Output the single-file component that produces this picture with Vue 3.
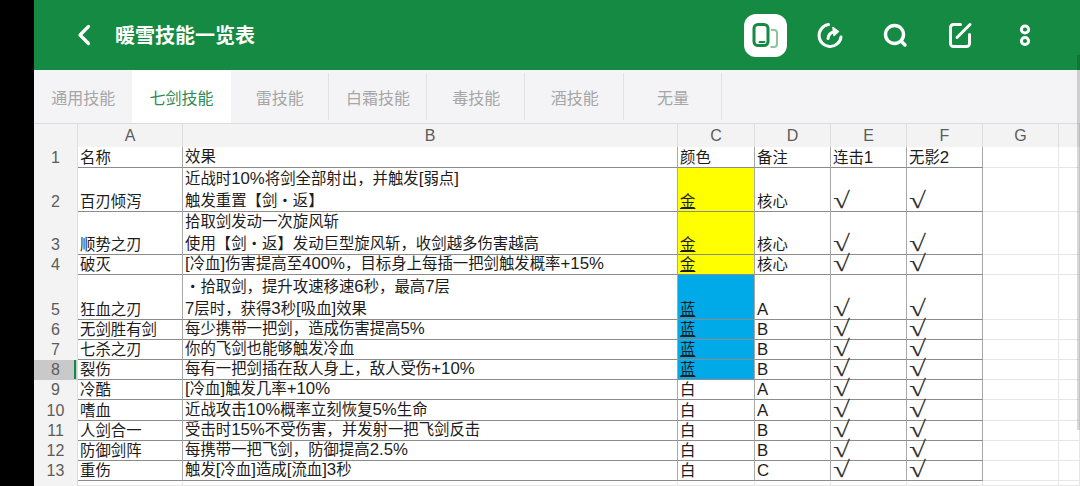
<script setup>
const tabs = ['通用技能', '七剑技能', '雷技能', '白霜技能', '毒技能', '酒技能', '无量']
const cols = ['A', 'B', 'C', 'D', 'E', 'F', 'G', '']
const rows = [
  { h: 21, name: '名称', fx: ['效果'], color: '颜色', note: '备注', e: '连击1', f: '无影2', title: true },
  { h: 44, name: '百刃倾泻', fx: ['近战时10%将剑全部射出，并触发[弱点]', '触发重置【剑・返】'], color: '金', tone: 'gold', note: '核心' },
  { h: 43, name: '顺势之刃', fx: ['拾取剑发动一次旋风斩', '使用【剑・返】发动巨型旋风斩，收剑越多伤害越高'], color: '金', tone: 'gold', note: '核心' },
  { h: 20, name: '破灭', fx: ['[冷血]伤害提高至400%，目标身上每插一把剑触发概率+15%'], color: '金', tone: 'gold', note: '核心' },
  { h: 45, name: '狂血之刃', fx: ['・拾取剑，提升攻速移速6秒，最高7层', '7层时，获得3秒[吸血]效果'], color: '蓝', tone: 'blue', note: 'A' },
  { h: 20, name: '无剑胜有剑', fx: ['每少携带一把剑，造成伤害提高5%'], color: '蓝', tone: 'blue', note: 'B' },
  { h: 20, name: '七杀之刃', fx: ['你的飞剑也能够触发冷血'], color: '蓝', tone: 'blue', note: 'B' },
  { h: 20, name: '裂伤', fx: ['每有一把剑插在敌人身上，敌人受伤+10%'], color: '蓝', tone: 'blue', note: 'B', active: true },
  { h: 20, name: '冷酷', fx: ['[冷血]触发几率+10%'], color: '白', note: 'A' },
  { h: 21, name: '嗜血', fx: ['近战攻击10%概率立刻恢复5%生命'], color: '白', note: 'A' },
  { h: 20, name: '人剑合一', fx: ['受击时15%不受伤害，并发射一把飞剑反击'], color: '白', note: 'B' },
  { h: 20, name: '防御剑阵', fx: ['每携带一把飞剑，防御提高2.5%'], color: '白', note: 'B' },
  { h: 20, name: '重伤', fx: ['触发[冷血]造成[流血]3秒'], color: '白', note: 'C' },
]
const rowTemplate = '23px ' + rows.map(r => r.h + 'px').join(' ') + ' 5px'
const runs = s => s.split(/([\x21-\x7e]+)/).filter(Boolean).map(t => ({ t, lat: /^[\x21-\x7e]/.test(t) }))
</script>

<template>
  <div class="page">
    <div class="edge"></div>
    <main class="app">
      <header class="bar">
        <svg class="back" width="16" height="24" viewBox="0 0 16 24"><path d="M12.500 3.500 4 12l8.500 8.500" fill="none" stroke="#fff" stroke-width="3.200" stroke-linecap="round" stroke-linejoin="round"/></svg>
        <h1 class="title">暖雪技能一览表</h1>
        <div class="actions">
          <span class="device">
            <svg width="30" height="30" viewBox="0 0 30 30">
              <path d="M20 10h3a3 3 0 0 1 3 3v11a3 3 0 0 1-3 3h-3.500" fill="none" stroke="#8dc3a2" stroke-width="2"/>
              <rect x="3" y="4.500" width="14" height="21" rx="4" fill="#fff" stroke="#158a42" stroke-width="3"/>
              <path d="M8.500 22h5" stroke="#158a42" stroke-width="2" stroke-linecap="round"/>
            </svg>
          </span>
          <svg width="28" height="28" viewBox="0 0 28 28" fill="none" stroke="#fff" stroke-width="3" stroke-linecap="round" stroke-linejoin="round">
            <path d="M12.500 3.600A11 11 0 1 0 25 16"/>
            <path d="M12 17.500c.3-3.500 2.500-6 6.500-7"/>
            <path d="M17 6.500 22.500 10.500 18 14.500Z" fill="#fff" stroke-width="1.500"/>
          </svg>
          <svg width="28" height="28" viewBox="0 0 28 28" fill="none" stroke="#fff" stroke-width="3.400" stroke-linecap="round">
            <circle cx="13.500" cy="13.500" r="9"/>
            <path d="M20.500 20.500l3.500 3.500"/>
          </svg>
          <svg width="28" height="28" viewBox="0 0 28 28" fill="none" stroke="#fff" stroke-width="3" stroke-linecap="round" stroke-linejoin="round">
            <path d="M14.500 3.500H7.500a3 3 0 0 0-3 3v16a3 3 0 0 0 3 3h13a3 3 0 0 0 3-3v-9"/>
            <path d="M11 16.500 24 3.500"/>
          </svg>
          <svg width="28" height="28" viewBox="0 0 28 28" fill="none" stroke="#fff" stroke-width="3">
            <circle cx="14" cy="8.500" r="3.600"/>
            <circle cx="14" cy="20" r="3.600"/>
          </svg>
        </div>
      </header>

      <nav class="tabs">
        <div v-for="(t, i) in tabs" :key="t" class="tab" :class="{ on: i === 1 }">{{ t }}</div>
      </nav>

      <section class="sheet" :style="{ gridTemplateRows: rowTemplate }">
        <div class="head"></div>
        <div v-for="c in cols" :key="'c' + c" class="head">{{ c }}</div>

        <template v-for="(r, i) in rows" :key="i">
          <div class="num" :class="{ sel: r.active }">{{ i + 1 }}</div>
          <div class="cell">{{ r.name }}</div>
          <div class="cell fx">
            <div v-for="l in r.fx" :key="l"><span v-for="(p, k) in runs(l)" :key="k" :class="{ lat: p.lat }">{{ p.t }}</span></div>
          </div>
          <div class="cell" :class="r.tone">{{ r.color }}</div>
          <div class="cell"><div><span v-for="(p, k) in runs(r.note)" :key="k" :class="{ lat: p.lat }">{{ p.t }}</span></div></div>
          <template v-if="r.title">
            <div class="cell"><div><span v-for="(p, k) in runs(r.e)" :key="k" :class="{ lat: p.lat }">{{ p.t }}</span></div></div>
            <div class="cell"><div><span v-for="(p, k) in runs(r.f)" :key="k" :class="{ lat: p.lat }">{{ p.t }}</span></div></div>
          </template>
          <template v-else>
            <div class="cell"><span class="tick">√</span></div>
            <div class="cell"><span class="tick">√</span></div>
          </template>
          <div class="blank"></div>
          <div class="blank"></div>
        </template>
        <div class="num"></div>
        <div class="blank tail" v-for="n in 8" :key="'t' + n"></div>
      </section>
      <div class="scroll"></div>
    </main>
  </div>
</template>

<style>
html, body { margin: 0; background: #000; overflow: hidden; }
</style>

<style scoped>
.page {
  display: flex;
  width: 1080px;
  height: 486px;
  overflow: hidden;
  font-family: "Liberation Sans", "Noto Sans CJK SC", sans-serif;
  color: #1c1c1c;
}
.edge { width: 34px; flex: none; background: #000; }
.app { position: relative; flex: 1; min-width: 0; background: #fff; }

.bar {
  display: flex;
  align-items: center;
  height: 70px;
  background: #158a42;
  color: #fff;
}
.back { margin-left: 42px; }
.title { margin: 0 0 0 23px; padding-top: 2px; font-size: 20px; font-weight: 700; line-height: 28px; letter-spacing: 0; }
.actions { display: flex; align-items: center; margin-left: auto; margin-right: 41px; gap: 37px; }
.device {
  display: flex;
  align-items: center;
  justify-content: center;
  width: 43px;
  height: 43px;
  border-radius: 12px;
  background: #fff;
  margin-right: -8px;
}

.tabs {
  display: flex;
  height: 54px;
  background: #f4f4f6;
  box-sizing: border-box;
  border-bottom: 1px solid #dcdcdc;
}
.tab {
  position: relative;
  width: 98.300px;
  display: flex;
  align-items: center;
  justify-content: center;
  font-size: 16px;
  color: #a6a6a6;
}
.tab::after {
  content: "";
  position: absolute;
  right: 0;
  top: 3px;
  bottom: 3px;
  width: 1px;
  background: #e2e2e4;
}
.tab.on { background: #fff; color: #2e8b57; }
.tab.on::after, .tab:first-child::after { display: none; }

.sheet {
  display: grid;
  grid-template-columns: 44px 105px 495px 77px 76px 76px 76px 76px 21px;
  font-size: 15.400px;
}
.head {
  line-height: 23px;
  text-align: center;
  font-size: 16px;
  color: #5c5c5c;
  background: #f3f3f3;
  border-right: 1px solid #dedede;
  box-sizing: border-box;
}
.num {
  position: relative;
  display: flex;
  align-items: flex-end;
  justify-content: center;
  font-size: 16px;
  line-height: 20px;
  color: #5c5c5c;
  background: #f3f3f3;
  border-right: 1px solid #dedede;
  box-sizing: border-box;
  overflow: hidden;
}
.num.sel { background: #c9c9c9; }
.num.sel::after {
  content: "";
  position: absolute;
  right: 1px;
  top: 0;
  bottom: 1px;
  width: 2px;
  background: #158a42;
}
.cell {
  display: flex;
  flex-direction: column;
  justify-content: flex-end;
  box-sizing: border-box;
  padding-left: 2px;
  line-height: 19px;
  white-space: nowrap;
  border-right: 1px solid #a8a8a8;
  border-bottom: 1px solid #8c8c8c;
}
.fx { line-height: 21.500px; }
.lat { font-size: 16.800px; }
.gold { background: #ffff00; text-decoration: underline; }
.blue { background: #00a9e8; text-decoration: underline; }
.tick {
  display: block;
  font-family: "Liberation Serif", serif;
  font-size: 23px;
  line-height: 19px;
  color: #333;
  transform: translateY(-1px) scaleX(1.35);
  transform-origin: 0 100%;
}
.blank { border-right: 1px solid #e6e6e6; border-bottom: 1px solid #e6e6e6; box-sizing: border-box; }
.scroll {
  position: absolute;
  right: 0;
  top: 55px;
  width: 3px;
  height: 375px;
  background: rgba(0, 0, 0, 0.15);
}
</style>
